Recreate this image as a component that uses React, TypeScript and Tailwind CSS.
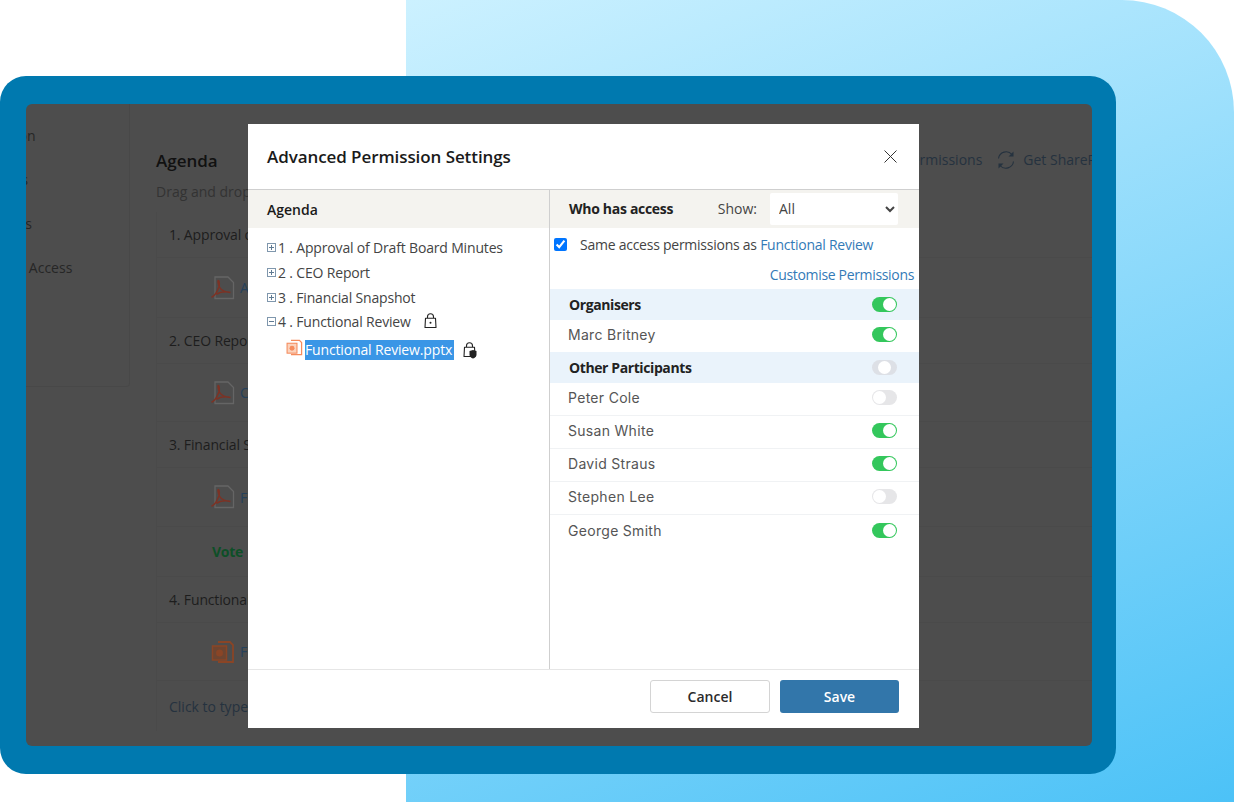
import { useId } from 'react'

const ui = { fontFamily: '"Open Sans", "Noto Sans", sans-serif' }
const names = { fontFamily: 'Inter, "Noto Sans", sans-serif' }

function PdfIcon() {
  return (
    <svg width="24" height="24" viewBox="0 0 24 24" fill="none" className="shrink-0">
      <path d="M4 1h13l5.500 5.500V22.500H4z" stroke="#656565" strokeWidth="1.300" />
      <path d="M1 21c3-1.500 5.500-6 7-10.500.6-2.200.2-6-.6-6s-.4 3 1 6.500c1.500 3 5 5 11 5.500-4-1-10-.5-13.500 1.500" stroke="#7d3224" strokeWidth="1.500" strokeLinecap="round" />
    </svg>
  )
}

function PptIcon({ dim }: { dim?: boolean }) {
  const c = dim ? '#8a4526' : '#f58c5d'
  return (
    <svg width={dim ? 24 : 17} height={dim ? 24 : 17} viewBox="0 0 24 24" fill="none" className="shrink-0">
      <path d="M7 2h12l3 3v17H7" stroke={c} strokeWidth="1.800" fill={dim ? 'none' : '#fff'} />
      <rect x="1.500" y="6" width="14" height="14" fill={dim ? '#6e4531' : '#fbd3bd'} stroke={c} strokeWidth="1.500" />
      <circle cx="8.500" cy="13" r="3.500" fill={c} />
    </svg>
  )
}

function TreeBox({ open }: { open?: boolean }) {
  return (
    <svg width="9" height="9" viewBox="0 0 9 9" className="shrink-0">
      <rect x=".5" y=".5" width="8" height="8" fill="none" stroke="#7f97ad" />
      <path d={open ? 'M2 4.500h5' : 'M2 4.500h5M4.500 2v5'} stroke="#5f7a92" />
    </svg>
  )
}

function LockIcon({ shield }: { shield?: boolean }) {
  return (
    <svg width="17" height="17" viewBox="0 0 17 17" fill="none" className="shrink-0">
      <path d="M5.500 5V3.800a3 3 0 0 1 6 0V5" stroke="#222" strokeWidth="1.100" />
      <path d="M3.500 5.200h10l.5 9.300H3z" stroke="#222" strokeWidth="1.100" strokeLinejoin="round" fill="#fff" />
      {shield ? (
        <path d="M8.500 9l3.500-1 3.500 1v3.500c0 2-1.500 3.500-3.500 4-2-.5-3.500-2-3.500-4z" fill="#222" />
      ) : (
        <circle cx="8.500" cy="9.800" r="1" fill="#222" />
      )}
    </svg>
  )
}

function SyncIcon() {
  return (
    <svg width="20" height="20" viewBox="0 0 20 20" fill="none" className="shrink-0">
      <path d="M2.500 8.500A7.700 7.700 0 0 1 16 4.500" stroke="#25323f" strokeWidth="1.100" />
      <path d="M17.500 11.500A7.700 7.700 0 0 1 4 15.500" stroke="#25323f" strokeWidth="1.100" />
      <path d="M17.500 1.500v5h-5zM2.500 18.500v-5h5z" fill="#25323f" />
    </svg>
  )
}

function Toggle({ on, faded }: { on?: boolean; faded?: boolean }) {
  return (
    <span
      className={`flex h-[15px] w-[25px] shrink-0 items-center rounded-full ${
        on ? 'justify-end bg-[#34c75c]' : faded ? 'justify-center bg-[#dde0e6]' : 'justify-start bg-[#e6e6e8]'
      }`}
    >
      <span className={`block h-[13px] w-[13px] rounded-full bg-white ${on ? 'mr-px' : faded ? '' : 'ml-px'}`} />
    </span>
  )
}

function GroupRow({ label, on, faded, h }: { label: string; on?: boolean; faded?: boolean; h: string }) {
  return (
    <div className={`flex items-center justify-between bg-[#eaf3fb] pb-[1px] pl-[19px] pr-[22px] text-[14px] font-bold tracking-[-0.4px] text-[#222] ${h}`}>
      <span>{label}</span>
      <Toggle on={on} faded={faded} />
    </div>
  )
}

function PersonRow({ name, on, h, border }: { name: string; on?: boolean; h: string; border?: boolean }) {
  return (
    <div
      className={`flex items-center justify-between pb-[3px] pl-[18px] pr-[22px] text-[14px] tracking-[0.3px] text-[#555] ${h} ${
        border ? 'border-b border-[#f0f2f4]' : ''
      }`}
      style={names}
    >
      <span>{name}</span>
      <Toggle on={on} />
    </div>
  )
}

function TreeRow({ label, open }: { label: string; open?: boolean }) {
  return (
    <div className={`flex h-[25px] items-center gap-[2px] text-[14px] tracking-[-0.17px] text-[#444] ${open ? '-mt-px' : ''}`}>
      <TreeBox open={open} />
      <span>{label}</span>
      {open && (
        <span className="ml-[9px]">
          <LockIcon />
        </span>
      )}
    </div>
  )
}

function AgendaItem({ label, h }: { label: string; h: string }) {
  return (
    <div className={`flex items-center border-b border-[#4a4a4a] pl-3 text-[14px] tracking-[-0.15px] text-[#1d1d1d] ${h}`}>{label}</div>
  )
}

function DocRow({ name, ppt, h }: { name: string; ppt?: boolean; h: string }) {
  return (
    <div className={`flex items-center gap-[5px] border-b border-[#4a4a4a] pl-[54px] text-[14px] text-[#25405a] ${h}`}>
      {ppt ? <PptIcon dim /> : <PdfIcon />}
      <span>{name}</span>
    </div>
  )
}

export default function App() {
  const showId = useId()
  return (
    <div className="relative h-[802px] w-[1234px] overflow-hidden bg-white" style={ui}>
      <div className="absolute inset-y-0 left-[406px] right-0 rounded-tr-[112px] bg-linear-[159deg] from-[#ccf1ff] to-[#4cc2f7]" />

      {/* framed app window */}
      <div className="absolute left-0 top-[76px] h-[698px] w-[1116px] rounded-[26px] bg-[#0079af] pb-[28px] pl-[26px] pr-[24px] pt-[28px]">
        <div className="flex h-full overflow-hidden rounded-[6px] bg-[#4d4d4d]">
          <aside className="h-[283px] w-[104px] shrink-0 overflow-hidden rounded-br-[4px] border-b border-r border-[#484848] pt-[21px]">
            <div className="-ml-[51px] flex flex-col whitespace-nowrap text-[14px] text-[#262626]">
              <span className="-ml-[9px] h-[44px] leading-[22px]">Discussion</span>
              <span className="h-[44px] leading-[22px]">Minutes</span>
              <span className="h-[44px] leading-[22px]">Contacts</span>
              <span className="-ml-[2px] h-[44px] leading-[22px]">Manage Access</span>
            </div>
          </aside>

          <main className="min-w-0 flex-1 pl-[26px]">
            <div className="flex h-[70px] items-end justify-between">
              <h1 className="text-[17px] font-semibold leading-[26px] text-[#111]">Agenda</h1>
              <div className="-mr-[60px] flex items-center gap-[14px] whitespace-nowrap pb-[4px] text-[14px] text-[#25323f]">
                <span>Manage Permissions</span>
                <SyncIcon />
                <span className="-ml-[7px]">Get SharePoint Link</span>
              </div>
            </div>
            <p className="pt-[8px] text-[14px] leading-[20px] text-[#333]">Drag and drop to reorder</p>
            <div className="mt-[10px] border-l border-[#4a4a4a]">
              <AgendaItem label="1. Approval of Draft Board Minutes" h="h-[46px]" />
              <DocRow name="Approval of Draft Board Minutes.pdf" h="h-[60px]" />
              <AgendaItem label="2. CEO Report" h="h-[46px]" />
              <DocRow name="CEO Report.pdf" h="h-[58px]" />
              <AgendaItem label="3. Financial Snapshot" h="h-[46px]" />
              <DocRow name="Financial Snapshot.pdf" h="h-[59px]" />
              <div className="flex h-[50px] items-center border-b border-[#4a4a4a] pl-[55px] text-[14px] font-bold tracking-[-0.3px] text-[#0d4f27]">Vote</div>
              <AgendaItem label="4. Functional Review" h="h-[46px]" />
              <DocRow name="Functional Review.pptx" ppt h="h-[58px]" />
              <div className="flex h-[50px] items-center pl-3 text-[14px] text-[#25323f]">Click to type</div>
            </div>
          </main>
        </div>
      </div>

      {/* modal */}
      <div className="absolute left-[248px] top-[124px] flex h-[604px] w-[671px] flex-col bg-white">
        <header className="flex h-[66px] shrink-0 items-center justify-between border-b border-[#cfcfcf] pl-[19px] pr-[22px]">
          <h2 className="text-[17px] font-semibold tracking-[-0.08px] text-[#1a1a1a]">Advanced Permission Settings</h2>
          <svg width="13" height="13" viewBox="0 0 13 13" fill="none">
            <path d="M.5.5l12 12M12.500.5l-12 12" stroke="#333" strokeWidth="1" />
          </svg>
        </header>

        <div className="flex min-h-0 flex-1">
          <section className="w-[302px] shrink-0 border-r border-[#cfcfcf]">
            <div className="flex h-[38px] items-center bg-[#f4f3ef] pl-[19px] text-[14px] font-semibold text-[#1a1a1a]">Agenda</div>
            <div className="pl-[19px] pt-[7px]">
              <TreeRow label="1 . Approval of Draft Board Minutes" />
              <TreeRow label="2 . CEO Report" />
              <TreeRow label="3 . Financial Snapshot" />
              <TreeRow label="4 . Functional Review" open />
              <div className="mt-[3px] flex h-[25px] items-center pl-[19px] text-[14px] tracking-[-0.15px]">
                <span className="-mt-[4px]">
                  <PptIcon />
                </span>
                <span className="ml-[2px] bg-[#3a96e6] pr-[2px] leading-[20px] text-white">Functional Review.pptx</span>
                <span className="ml-[7px] mt-[2px]">
                  <LockIcon shield />
                </span>
              </div>
            </div>
          </section>

          <section className="min-w-0 flex-1">
            <div className="flex h-[38px] items-center bg-[#f4f3ef] pb-[1px] pl-[19px] pr-[21px] text-[14px]">
              <span className="font-bold tracking-[-0.3px] text-[#222]">Who has access</span>
              <label htmlFor={showId} className="ml-auto text-[#444]">Show:</label>
              <select id={showId} className="ml-[13px] h-[32px] w-[128px] rounded-[2px] bg-white pl-[5px] text-[14px] text-[#444]">
                <option>All</option>
              </select>
            </div>
            <div className="flex h-[34px] items-center pl-[4px] pb-[2px] text-[14px] tracking-[-0.25px] text-[#444]">
              <input type="checkbox" defaultChecked readOnly className="m-0 h-[13px] w-[13px]" />
              <span className="ml-[13px]">
                Same access permissions as <span className="text-[#337ab7]">Functional Review</span>
              </span>
            </div>
            <div className="h-[27px] pr-[5px] text-right text-[14px] leading-[25px] tracking-[-0.33px] text-[#337ab7]">Customise Permissions</div>
            <GroupRow label="Organisers" on h="h-[31px]" />
            <PersonRow name="Marc Britney" on h="h-[32px]" />
            <GroupRow label="Other Participants" faded h="h-[31px]" />
            <PersonRow name="Peter Cole" h="h-[33px]" border />
            <PersonRow name="Susan White" on h="h-[33px]" border />
            <PersonRow name="David Straus" on h="h-[33px]" border />
            <PersonRow name="Stephen Lee" h="h-[33px]" border />
            <PersonRow name="George Smith" on h="h-[33px]" />
          </section>
        </div>

        <footer className="flex h-[59px] shrink-0 items-start justify-end gap-[10px] border-t border-[#e6e6e6] pr-[20px] pt-[10px]">
          <button className="h-[33px] w-[120px] rounded-[3px] border border-[#d4d4d4] bg-white text-[14px] font-semibold text-[#2b2b2b]">Cancel</button>
          <button className="h-[33px] w-[119px] rounded-[3px] bg-[#3276aa] text-[14px] font-semibold text-white">Save</button>
        </footer>
      </div>
    </div>
  )
}
